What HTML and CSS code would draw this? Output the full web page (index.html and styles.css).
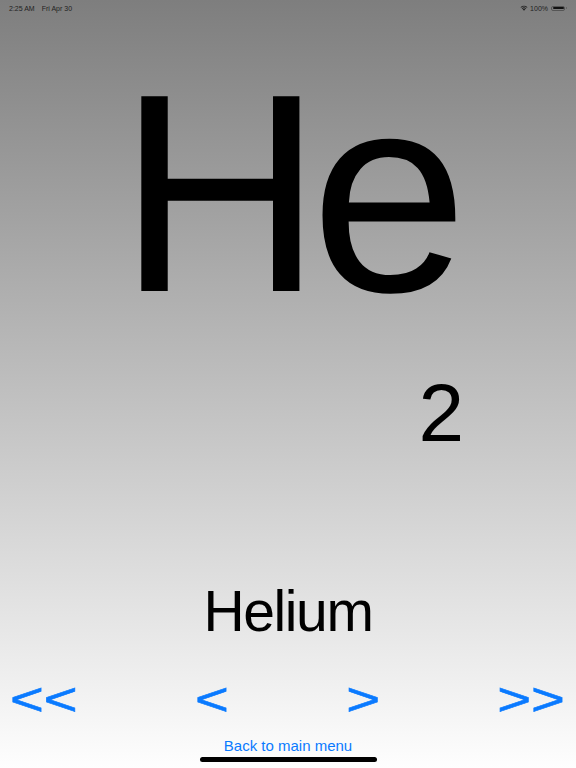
FILE: index.html
```html
<!DOCTYPE html>
<html>
<head>
<meta charset="utf-8">
<link rel="stylesheet" href="styles.css">
</head>
<body>
<div class="screen">
  <div class="status">
    <div class="status-left"><span>2:25 AM</span><span>Fri Apr 30</span></div>
    <div class="status-right">
      <svg class="wifi" width="8" height="6" viewBox="0 0 16 12"><path d="M8 11.5 L5.3 8.7 A3.8 3.8 0 0 1 10.7 8.7 Z" fill="#222"/><path d="M3.4 6.8 A6.5 6.5 0 0 1 12.6 6.8 L11.3 8.1 A4.7 4.7 0 0 0 4.7 8.1 Z" fill="#222"/><path d="M1 4.4 A10 10 0 0 1 15 4.4 L13.7 5.7 A8.2 8.2 0 0 0 2.3 5.7 Z" fill="#222"/></svg>
      <span class="pct">100%</span>
      <span class="battery"><span class="battery-fill"></span></span><span class="battery-cap"></span>
    </div>
  </div>
  <div class="symbol">He</div>
  <div class="number">2</div>
  <div class="name">Helium</div>
  <div class="nav">
    <span class="nav-btn">&lt;&lt;</span>
    <span class="nav-btn">&lt;</span>
    <span class="nav-btn">&gt;</span>
    <span class="nav-btn">&gt;&gt;</span>
  </div>
  <div class="back">Back to main menu</div>
  <div class="home-indicator"></div>
</div>
</body>
</html>
```
FILE: styles.css
```css
html, body {
  margin: 0;
  padding: 0;
}
body {
  width: 576px;
  height: 768px;
  overflow: hidden;
  font-family: "Liberation Sans", Arial, sans-serif;
}
.screen {
  width: 576px;
  height: 768px;
  background: linear-gradient(to bottom, #7e7e7e 0%, #fefefe 100%);
  display: flex;
  flex-direction: column;
}
.status {
  height: 16px;
  display: flex;
  justify-content: space-between;
  align-items: center;
  padding: 0 9px 0 9px;
  font-size: 7px;
  color: #222;
  box-sizing: border-box;
}
.status-left {
  display: flex;
  gap: 7px;
}
.status-right {
  display: flex;
  align-items: center;
  gap: 2px;
}
.pct {
  margin-right: 1px;
}
.battery {
  width: 14px;
  height: 5px;
  border: 1px solid #555;
  border-radius: 2px;
  box-sizing: border-box;
  padding: 0.5px;
  display: flex;
}
.battery-fill {
  flex: 1;
  background: #111;
  border-radius: 1px;
}
.battery-cap {
  width: 1px;
  height: 2px;
  background: #666;
  margin-left: -1px;
}
.symbol {
  margin-top: 35px;
  font-size: 283px;
  line-height: 285px;
  height: 285px;
  text-align: center;
  letter-spacing: -12px;
  color: #000;
  padding-right: 2px;
}
.number {
  margin-top: 36px;
  font-size: 82px;
  line-height: 82px;
  height: 82px;
  text-align: right;
  padding-right: 112px;
  color: #000;
}
.name {
  margin-top: 128px;
  font-size: 57px;
  line-height: 58px;
  height: 58px;
  text-align: center;
  letter-spacing: -1.4px;
  color: #000;
}
.nav {
  margin-top: 28px;
  height: 58px;
  display: flex;
  justify-content: space-between;
  padding: 0 11px 0 10px;
  font-size: 58px;
  line-height: 58px;
  color: #0a7aff;
}
.nav-btn {
  display: inline-block;
  transform: scaleY(0.8) translateY(3px);
  -webkit-text-stroke: 0.8px #0a7aff;
}
.back {
  margin-top: 12px;
  font-size: 15px;
  line-height: 15px;
  height: 15px;
  text-align: center;
  color: #0a7aff;
}
.home-indicator {
  margin: 4px auto 0 auto;
  width: 177px;
  height: 5px;
  border-radius: 3px;
  background: #000;
}
```
